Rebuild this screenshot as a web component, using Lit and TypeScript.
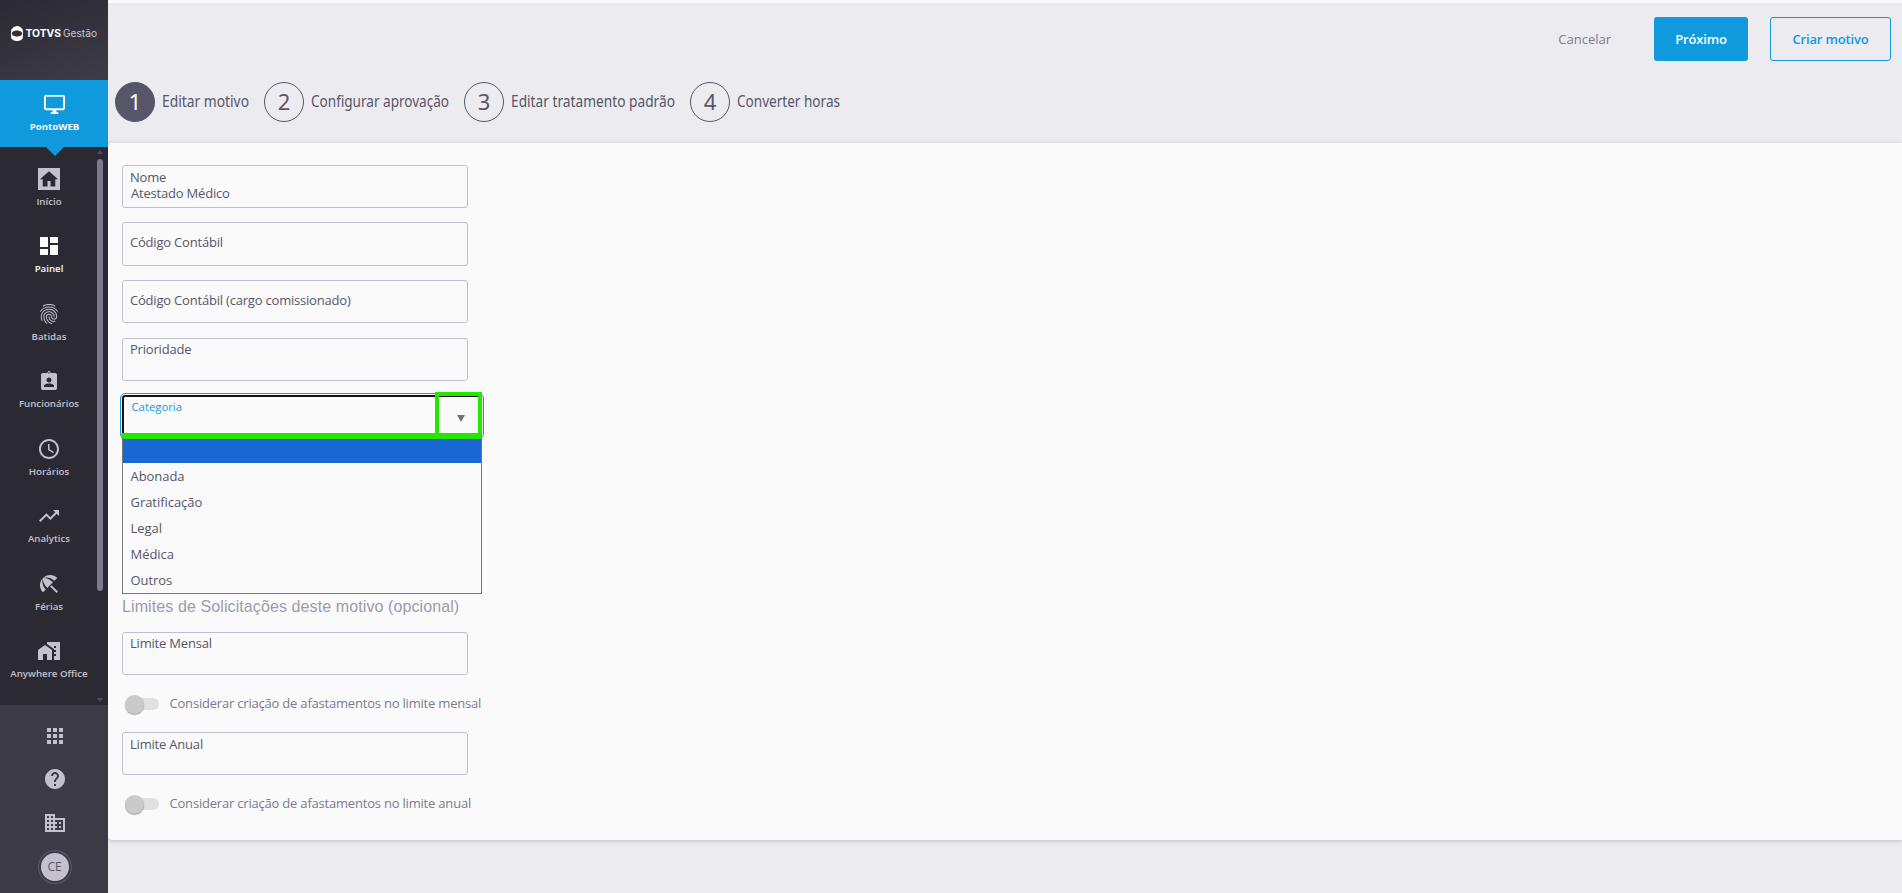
import { LitElement, html, css, svg, nothing } from "lit";
import { customElement, property } from "lit/decorators.js";

const ICONS: Record<string, string> = {
  desktop: "M21 2H3c-1.1 0-2 .9-2 2v12c0 1.1.9 2 2 2h7v2H8v2h8v-2h-2v-2h7c1.1 0 2-.9 2-2V4c0-1.1-.9-2-2-2zm0 14H3V4h18v12z",
  dashboard: "M3 13h8V3H3v10zm0 8h8v-6H3v6zm10 0h8V11h-8v10zm0-18v6h8V3h-8z",
  fingerprint: "M17.81 4.47c-.08 0-.16-.02-.23-.06C15.66 3.42 14 3 12.01 3c-1.98 0-3.86.47-5.57 1.41-.24.13-.54.04-.68-.2-.13-.24-.04-.55.2-.68C7.82 2.52 9.86 2 12.01 2c2.13 0 3.99.47 6.03 1.52.25.13.34.43.21.67-.09.18-.26.28-.44.28zM3.5 9.72c-.1 0-.2-.03-.29-.09-.23-.16-.28-.47-.12-.7.99-1.4 2.25-2.5 3.75-3.27C9.98 4.04 14 4.03 17.15 5.65c1.5.77 2.76 1.86 3.75 3.25.16.22.11.54-.12.7-.23.16-.54.11-.7-.12-.9-1.26-2.04-2.25-3.39-2.94-2.87-1.47-6.54-1.47-9.4.01-1.36.7-2.5 1.7-3.4 2.96-.08.14-.23.21-.39.21zm6.25 12.07c-.13 0-.26-.05-.35-.15-.87-.87-1.34-1.43-2.01-2.64-.69-1.23-1.05-2.73-1.05-4.34 0-2.97 2.54-5.39 5.66-5.39s5.66 2.42 5.66 5.39c0 .28-.22.5-.5.5s-.5-.22-.5-.5c0-2.42-2.09-4.39-4.66-4.39-2.57 0-4.66 1.97-4.66 4.39 0 1.44.32 2.77.93 3.85.64 1.15 1.08 1.64 1.85 2.42.19.2.19.51 0 .71-.11.1-.24.15-.37.15zm7.17-1.85c-1.19 0-2.24-.3-3.1-.89-1.49-1.01-2.38-2.65-2.38-4.39 0-.28.22-.5.5-.5s.5.22.5.5c0 1.41.72 2.74 1.94 3.56.71.48 1.54.71 2.54.71.24 0 .64-.03 1.04-.1.27-.05.53.13.58.41.05.27-.13.53-.41.58-.57.11-1.07.12-1.21.12zM14.91 22c-.04 0-.09-.01-.13-.02-1.59-.44-2.63-1.03-3.72-2.1-1.4-1.39-2.17-3.24-2.17-5.22 0-1.62 1.38-2.94 3.08-2.94 1.7 0 3.08 1.32 3.08 2.94 0 1.07.93 1.94 2.08 1.94s2.08-.87 2.08-1.94c0-3.77-3.25-6.83-7.25-6.83-2.84 0-5.44 1.58-6.61 4.03-.39.81-.59 1.76-.59 2.8 0 .78.07 2.01.67 3.61.1.26-.03.55-.29.64-.26.1-.55-.04-.64-.29-.49-1.31-.73-2.61-.73-3.96 0-1.2.23-2.29.68-3.24 1.33-2.79 4.28-4.6 7.51-4.6 4.55 0 8.25 3.51 8.25 7.83 0 1.62-1.38 2.94-3.08 2.94s-3.08-1.32-3.08-2.94c0-1.07-.93-1.94-2.08-1.94s-2.08.87-2.08 1.94c0 1.71.66 3.31 1.87 4.51.95.94 1.86 1.46 3.27 1.85.27.07.42.35.35.61-.05.23-.26.38-.47.38z",
  badge: "M18.2 4h-4.5c-.2-1.1-.9-2-1.7-2s-1.5.9-1.7 2H5.8C4.8 4 4 4.8 4 5.8v13.4c0 1 .8 1.8 1.8 1.8h12.4c1 0 1.8-.8 1.8-1.8V5.8c0-1-.8-1.8-1.8-1.8zM12 3.2c.5 0 .8.4.8.8s-.3.8-.8.8-.8-.4-.8-.8.3-.8.8-.8zM12 8.500c1.400 0 2.500 1.100 2.500 2.500s-1.100 2.500-2.500 2.500-2.500-1.100-2.500-2.500 1.100-2.500 2.500-2.500zM17 18H7v-1.200c0-1.500 3.300-2.300 5-2.300s5 .8 5 2.300V18z",
  clock: "M11.99 2C6.47 2 2 6.48 2 12s4.470 10 9.990 10C17.520 22 22 17.520 22 12S17.520 2 11.990 2zM12 20c-4.420 0-8-3.580-8-8s3.580-8 8-8 8 3.580 8 8-3.580 8-8 8zm.500-13H11v6l5.250 3.150.750-1.230-4.500-2.670z",
  trend: "M16 6l2.290 2.290-4.880 4.880-4-4L2 16.590 3.410 18l6-6 4 4 6.300-6.290L22 12V6z",
  beach: "M13.127 14.560l1.430-1.430 6.440 6.443L19.570 21zM17.420 8.830l2.860-2.860c-3.950-3.950-10.350-3.960-14.300-.020 3.930-1.300 8.310-.250 11.440 2.880zM5.950 5.980c-3.940 3.950-3.930 10.350.020 14.300l2.860-2.860C5.700 14.290 4.650 9.910 5.950 5.980zM5.970 5.960l-.010.010c-.380 3.010 1.170 6.880 4.300 10.020l5.730-5.730c-3.130-3.130-7.010-4.680-10.020-4.300z",
  homework: "M1 11v10h5v-6h4v6h5V11L8 6zM10 3v1.970l7 5V11h2v2h-2v2h2v2h-2v4h6V3H10zm9 6h-2V7h2v2z",
  apps: "M4 8h4V4H4v4zm6 12h4v-4h-4v4zm-6 0h4v-4H4v4zm0-6h4v-4H4v4zm6 0h4v-4h-4v4zm6-10v4h4V4h-4zm-6 4h4V4h-4v4zm6 6h4v-4h-4v4zm0 6h4v-4h-4v4z",
  help: "M12 2C6.480 2 2 6.480 2 12s4.480 10 10 10 10-4.480 10-10S17.520 2 12 2zm1 17h-2v-2h2v2zm2.070-7.750l-.900.920C13.450 12.900 13 13.500 13 15h-2v-.500c0-1.100.450-2.100 1.170-2.830l1.240-1.260c.370-.360.590-.860.590-1.410 0-1.100-.900-2-2-2s-2 .900-2 2H8c0-2.210 1.790-4 4-4s4 1.790 4 4c0 .880-.360 1.680-.930 2.250z",
  building: "M12 7V3H2v18h20V7H12zM6 19H4v-2h2v2zm0-4H4v-2h2v2zm0-4H4V9h2v2zm0-4H4V5h2v2zm4 12H8v-2h2v2zm0-4H8v-2h2v2zm0-4H8V9h2v2zm0-4H8V5h2v2zm10 12h-8v-2h2v-2h-2v-2h2v-2h-2V9h8v10zm-2-8h-2v2h2v-2zm0 4h-2v2h2v-2z",
  home: "M1 1h22v22H1zM12 4.200 3 12.200h2.700V19.500h4.800v-5.500h3v5.500h4.800v-7.300H21z",
};

const icon = (name: string, size = 24) => html`<svg width=${size} height=${size} viewBox="0 0 24 24" fill="currentColor">
  ${svg`<path fill-rule=${name === "beach" ? "nonzero" : "evenodd"} d=${ICONS[name]}></path>`}
</svg>`;

@customElement("side-bar")
class SideBar extends LitElement {
  static styles = css`
    :host { display: flex; flex-direction: column; width: 108px; height: 893px; flex: none; color: #c2c1cd; font-family: "Open Sans", sans-serif; }
    svg { display: block; }
    .brand { box-sizing: border-box; height: 80px; padding: 25px 0 0 10px; background: linear-gradient(160deg, #2b2a33, #3d3c47); }
    .product { position: relative; height: 67px; background: #1199dd; color: #fafafa; display: flex; flex-direction: column; align-items: center; padding: 13px 0 0 1px; box-sizing: border-box; }
    .product svg { margin-bottom: 4px; }
    .product::after { content: ""; position: absolute; top: 67px; left: 45.500px; border: 9px solid transparent; border-top-color: #1199dd; border-bottom: 0; }
    .label { font-size: 9.700px; font-weight: 600; line-height: 14px; white-space: nowrap; }
    .product .label { font-weight: 700; font-size: 9.600px; }
    .scroll { height: 558px; display: flex; background: #2b2a33; }
    .items { width: 98px; margin-right: -1px; display: flex; flex-direction: column; padding-top: 19.500px; }
    .item { height: 67.5px; flex: none; display: flex; flex-direction: column; align-items: center; gap: 4px; }
    .item.on { color: #fafafa; }
    .bar { width: 6px; display: flex; flex-direction: column; align-items: center; padding: 3px 0; justify-content: space-between; }
    .up, .down { border: 3px solid transparent; border-bottom: 4px solid #4e4d5b; border-top: 0; }
    .down { border-top: 4px solid #4e4d5b; border-bottom: 0; }
    .thumb { width: 6px; height: 432px; border-radius: 3px; background: #7b7a90; margin: 5px 0 auto; }
    .tools { flex: 1; display: flex; flex-direction: column; align-items: center; background: #3c3b45; padding: 19px 0 0 1px; gap: 19.500px; }
    .tools svg:nth-of-type(2) { margin: -.5px 0 .5px; }
    .avatar { width: 28px; height: 28px; border-radius: 50%; background: #c2c1cd; color: #575669; font-size: 12px; line-height: 28px; text-align: center; border: 2px solid #3c3b45; box-shadow: 0 0 0 1px #5b5a6c; margin-top: -4px; }
  `;
  render() {
    const items = [["home", "Início"], ["dashboard", "Painel"], ["fingerprint", "Batidas"], ["badge", "Funcionários"], ["clock", "Horários"], ["trend", "Analytics"], ["beach", "Férias"], ["homework", "Anywhere Office"]];
    return html`
      <div class="brand">
        <svg width="90" height="18" viewBox="0 0 90 18" fill="#fff">
          <path fill-rule="evenodd" d="M7 1a7 7 0 0 1 5.600 3.300c.5.700.5 8.700 0 9.400A7 7 0 0 1 7 16a7 7 0 0 1-5.500-2.300c-.6-.8-.6-8.600 0-9.400A7 7 0 0 1 7 1zM7 5.600c-2.600 0-5.200.9-5.200 3s2.600 3 5.200 3 5.100-.9 5.100-3-2.500-3-5.100-3z"></path>
          <text x="15.500" y="12.300" font-family="Inter" font-weight="700" font-size="9.800" textLength="35.500" lengthAdjust="spacingAndGlyphs">TOTVS</text>
          <text x="53" y="12.300" font-family="Inter" font-size="10" fill="#c9c8cf" textLength="34" lengthAdjust="spacingAndGlyphs">Gestão</text>
        </svg>
      </div>
      <div class="product">${icon("desktop", 23)}<span class="label">PontoWEB</span></div>
      <div class="scroll">
        <div class="items">
          ${items.map(([i, l]) => html`<div class="item ${l === "Painel" ? "on" : ""}">${icon(i)}<span class="label">${l}</span></div>`)}
        </div>
        <div class="bar"><i class="up"></i><i class="thumb"></i><i class="down"></i></div>
      </div>
      <div class="tools">${icon("apps")}${icon("help")}${icon("building")}<div class="avatar">CE</div></div>
    `;
  }
}

@customElement("form-field")
class FormField extends LitElement {
  @property() label = "";
  @property() value = "";
  static styles = css`
    :host { display: block; box-sizing: border-box; width: 346px; height: 43px; border: 1px solid #c0bfcc; border-radius: 3px; padding: 2px 7px 0; color: #575669; font: 13px/18px "Open Sans", sans-serif; letter-spacing: -.2px; }
    :host([middle]) { padding-top: 10px; }
    :host([high]) { padding-top: 1px; }
    .label, .value { display: block; }
    .value { line-height: 15px; padding-left: 1px; }
  `;
  render() {
    return html`<span class="label">${this.label}</span>${this.value ? html`<span class="value">${this.value}</span>` : nothing}`;
  }
}

@customElement("app-root")
class AppRoot extends LitElement {
  static styles = css`
    :host { display: flex; width: 1902px; height: 893px; overflow: hidden; background: #ecebf0; font-family: "Open Sans", sans-serif; font-size: 13px; color: #575669; }
    .main { flex: 1; display: flex; flex-direction: column; }
    .head { height: 143px; box-sizing: border-box; border-top: 3px solid #fafafa; padding-top: 14px; }
    .actions { display: flex; justify-content: flex-end; padding-right: 11px; height: 44px; line-height: 44px; font-weight: 600; letter-spacing: -.15px; }
    .cancel { font-weight: 500; color: #7b7a90; margin-right: 43px; letter-spacing: 0; }
    .btn { box-sizing: border-box; height: 44px; border-radius: 3px; text-align: center; }
    .next { width: 94px; background: #1199dd; color: #fff; margin-right: 22px; }
    .create { width: 121px; border: 1px solid #1199dd; color: #1199dd; line-height: 42px; }
    .steps { display: flex; padding: 21px 0 0 7px; gap: 15px; }
    .step { display: flex; gap: 7px; align-items: center; }
    .num { box-sizing: border-box; width: 40px; height: 40px; border: 1px solid #575669; border-radius: 50%; text-align: center; font: 22px/37px "Noto Sans", sans-serif; }
    .num.on { background: #575669; color: #fff; }
    .step svg { display: block; overflow: visible; }
    .step text { font-family: "Noto Sans", sans-serif; font-size: 15.500px; fill: #575669; }
    .panel { height: 697px; box-sizing: border-box; background: #fafafa; border-radius: 4px 0 0 4px; box-shadow: 0 1px 4px rgba(60, 59, 69, .25); padding: 22px 0 0 14px; display: flex; flex-direction: column; align-items: flex-start; }
    .f1 { margin-bottom: 14px; }
    .f2 { height: 44px; margin-bottom: 14px; }
    .f3 { margin-bottom: 15px; }
    .f4 { margin-bottom: 12px; }
    .combo { position: relative; box-sizing: border-box; width: 364px; height: 46px; margin: 0 0 -1px -2px; border: 1px solid #1199dd; border-radius: 5px; padding: 1px; }
    .inner { box-sizing: border-box; height: 42px; border: 2px solid #111; border-radius: 3px 3px 0 0; padding: 1px 7.500px; color: #1199dd; font-size: 11.300px; line-height: 17px; font-weight: 500; }
    .mark { position: absolute; left: 0; right: 1px; bottom: -1px; height: 6px; background: #25e600; border-radius: 2px; }
    .box { position: absolute; box-sizing: border-box; right: 1px; top: -2px; width: 47px; height: 46px; border: 4px solid #25e600; }
    .arrow { position: absolute; left: 18px; top: 19px; border: 4.500px solid transparent; border-top: 7px solid #757575; border-bottom: 0; }
    .list { position: relative; box-sizing: border-box; width: 360px; height: 156px; border: 1px solid #767676; border-top: 0; padding-top: 1px; line-height: 26px; letter-spacing: -.05px; }
    .opt { padding-left: 7.500px; height: 26px; }
    .opt.sel { height: 24px; background: #1967d2; }
    .title { font: 16px/18px "Liberation Sans", sans-serif; letter-spacing: .1px; color: #9c9bac; margin: 4px 0 16px; }
    .toggle { display: flex; align-items: center; height: 20px; margin: 18px 0 19px 3px; color: #7b7a90; gap: 10.500px; letter-spacing: -.2px; }
    .track { position: relative; top: 1px; width: 27px; height: 12px; margin-left: 7px; border-radius: 6px; background: #e1e1e1; display: flex; align-items: center; }
    .knob { flex: none; width: 19px; height: 19px; border-radius: 50%; background: #cacaca; box-shadow: 0 1px 1px rgba(0, 0, 0, .35); margin-left: -7px; }
  `;
  render() {
    const steps: [string, number][] = [["Editar motivo", 87], ["Configurar aprovação", 138], ["Editar tratamento padrão", 164], ["Converter horas", 103]];
    return html`
      <side-bar></side-bar>
      <div class="main">
        <div class="head">
          <div class="actions"><span class="cancel">Cancelar</span><span class="btn next">Próximo</span><span class="btn create">Criar motivo</span></div>
          <div class="steps">
            ${steps.map(([label, w], i) => html`<div class="step"><span class="num ${i === 0 ? "on" : ""}">${i + 1}</span>
              <svg width=${w} height="28"><text x="0" y="18.5" textLength=${w} lengthAdjust="spacingAndGlyphs">${label}</text></svg></div>`)}
          </div>
        </div>
        <div class="panel">
          <form-field class="f1" label="Nome" value="Atestado Médico"></form-field>
          <form-field class="f2" label="Código Contábil" middle></form-field>
          <form-field class="f3" label="Código Contábil (cargo comissionado)" middle></form-field>
          <form-field class="f4" label="Prioridade" high></form-field>
          <div class="combo"><div class="inner">Categoria</div><div class="mark"></div><div class="box"><i class="arrow"></i></div></div>
          <div class="list">
            <div class="opt sel"></div>
            ${["Abonada", "Gratificação", "Legal", "Médica", "Outros"].map((o) => html`<div class="opt">${o}</div>`)}
          </div>
          <div class="title">Limites de Solicitações deste motivo (opcional)</div>
          <form-field label="Limite Mensal" high></form-field>
          <div class="toggle"><span class="track"><i class="knob"></i></span>Considerar criação de afastamentos no limite mensal</div>
          <form-field label="Limite Anual"></form-field>
          <div class="toggle"><span class="track"><i class="knob"></i></span>Considerar criação de afastamentos no limite anual</div>
        </div>
      </div>
    `;
  }
}
